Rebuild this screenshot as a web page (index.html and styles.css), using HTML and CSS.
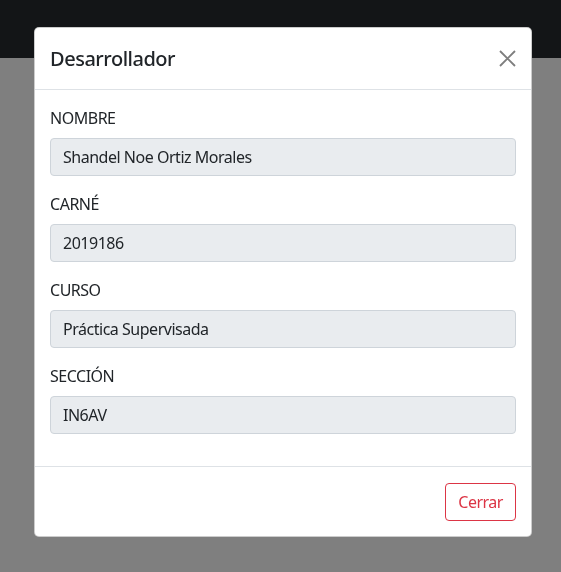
FILE: index.html
```html
<!DOCTYPE html>
<html lang="es">
<head>
<meta charset="utf-8">
<title>Desarrollador</title>
<link rel="stylesheet" href="styles.css">
</head>
<body>
<nav class="navbar"></nav>
<main class="page"></main>
<div class="backdrop"></div>
<div class="modal">
  <div class="modal-dialog">
    <div class="modal-content">
      <div class="modal-header">
        <h5 class="modal-title">Desarrollador</h5>
        <button class="btn-close" type="button" aria-label="Close">
          <svg width="17" height="17" viewBox="0 0 17 17"><path d="M1 1L16 16M16 1L1 16" stroke="#000" stroke-width="1.9" stroke-linecap="butt" fill="none"/></svg>
        </button>
      </div>
      <div class="modal-body">
        <div class="field">
          <label class="label">NOMBRE</label>
          <div class="input">Shandel Noe Ortiz Morales</div>
        </div>
        <div class="field">
          <label class="label">CARNÉ</label>
          <div class="input">2019186</div>
        </div>
        <div class="field">
          <label class="label">CURSO</label>
          <div class="input">Práctica Supervisada</div>
        </div>
        <div class="field">
          <label class="label">SECCIÓN</label>
          <div class="input">IN6AV</div>
        </div>
      </div>
      <div class="modal-footer">
        <button class="btn-outline-danger" type="button">Cerrar</button>
      </div>
    </div>
  </div>
</div>
</body>
</html>
```

FILE: styles.css
```css
* { box-sizing: border-box; }
html, body { margin: 0; padding: 0; height: 100%; }
body {
  font-family: "Noto Sans", "Open Sans", sans-serif;
  font-size: 16px;
  line-height: 1.5;
  letter-spacing: -0.03em;
  color: #212529;
  background: #fff;
  overflow: hidden;
}
.navbar { height: 58px; background: #262a2e; }
.page { height: calc(100% - 58px); background: #fff; }
.backdrop {
  position: fixed; inset: 0;
  background: rgba(0,0,0,0.5);
}
.modal {
  position: fixed; inset: 0;
  display: flex; justify-content: flex-start;
}
.modal-dialog {
  width: 498px;
  margin: 27px 0 0 34px;
}
.modal-content {
  background: #fff;
  border: 1px solid rgba(0,0,0,0.2);
  border-radius: 5px;
  display: flex; flex-direction: column;
}
.modal-header {
  display: flex; align-items: center; justify-content: space-between;
  padding: 15px;
  border-bottom: 1px solid #dee2e6;
  height: 62px;
}
.modal-title {
  margin: 0;
  font-size: 20px;
  font-weight: 500;
  line-height: 1.5;
}
.btn-close {
  border: 0; background: none; padding: 0;
  width: 18px; height: 18px;
  opacity: 0.5;
  display: flex; align-items: center; justify-content: center;
  margin-right: 0;
}
.modal-body { padding: 16px 15px; }
.field { margin-bottom: 16px; display: flex; flex-direction: column; }
.label { display: block; margin-bottom: 8px; line-height: 24px; }
.input {
  height: 38px;
  padding: 6px 12px;
  background: #e9ecef;
  border: 1px solid #ced4da;
  border-radius: 4px;
  color: #212529;
  line-height: 24px;
}
.modal-footer {
  display: flex; justify-content: flex-end;
  padding: 16px 15px 15px;
  border-top: 1px solid #dee2e6;
}
.btn-outline-danger {
  font: inherit;
  letter-spacing: -0.03em;
  height: 38px;
  padding: 6px 12px;
  color: #dc3545;
  background: transparent;
  border: 1px solid #dc3545;
  border-radius: 4px;
  line-height: 24px;
}
```
